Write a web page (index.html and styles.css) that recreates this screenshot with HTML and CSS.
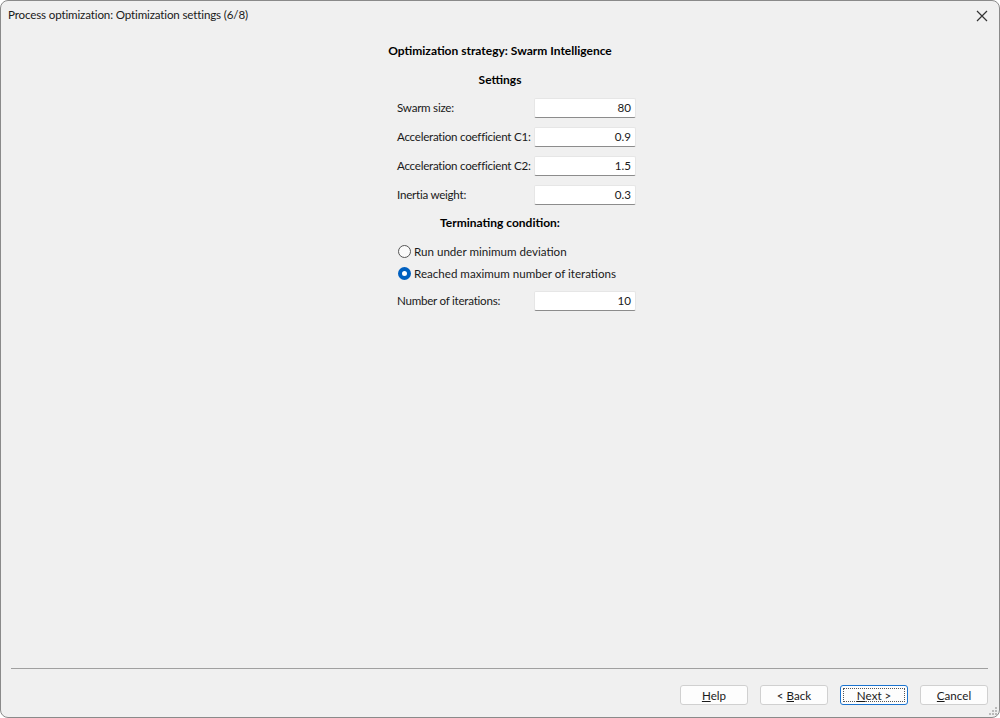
FILE: index.html
```html
<!DOCTYPE html>
<html>
<head>
<meta charset="utf-8">
<link rel="stylesheet" href="styles.css">
</head>
<body>
<div class="window">
  <div class="titlebar">
    <span class="title">Process optimization: Optimization settings (6/8)</span>
    <span class="close">
      <svg width="12" height="12" viewBox="0 0 12 12"><path d="M1 1 L11 11 M11 1 L1 11" stroke="#333" stroke-width="1.2" fill="none"/></svg>
    </span>
  </div>
  <div class="content">
    <div class="heading h-main">Optimization strategy: Swarm Intelligence</div>
    <div class="heading h-settings">Settings</div>
    <div class="form">
      <div class="row"><span class="label">Swarm size:</span><span class="input">80</span></div>
      <div class="row"><span class="label">Acceleration coefficient C1:</span><span class="input">0.9</span></div>
      <div class="row"><span class="label">Acceleration coefficient C2:</span><span class="input">1.5</span></div>
      <div class="row"><span class="label">Inertia weight:</span><span class="input">0.3</span></div>
    </div>
    <div class="heading h-term">Terminating condition:</div>
    <div class="form">
      <div class="radio"><span class="dot"></span><span>Run under minimum deviation</span></div>
      <div class="radio"><span class="dot checked"></span><span>Reached maximum number of iterations</span></div>
      <div class="row row-iter"><span class="label">Number of iterations:</span><span class="input">10</span></div>
    </div>
  </div>
  <div class="footer">
    <div class="separator"></div>
    <div class="buttons">
      <span class="btn"><u>H</u>elp</span>
      <span class="btn">&lt;&nbsp;<u>B</u>ack</span>
      <span class="btn default"><span class="focus"><u>N</u>ext&nbsp;&gt;</span></span>
      <span class="btn"><u>C</u>ancel</span>
    </div>
  </div>
  <svg class="grip" width="10" height="10" viewBox="0 0 10 10">
    <rect x="7" y="1" width="2" height="2" fill="#bbb"/>
    <rect x="4" y="4" width="2" height="2" fill="#bbb"/>
    <rect x="7" y="4" width="2" height="2" fill="#bbb"/>
    <rect x="1" y="7" width="2" height="2" fill="#bbb"/>
    <rect x="4" y="7" width="2" height="2" fill="#bbb"/>
    <rect x="7" y="7" width="2" height="2" fill="#bbb"/>
  </svg>
</div>
</body>
</html>
```
FILE: styles.css
```css
html, body {
  margin: 0;
  padding: 0;
  background: #ffffff;
}
body {
  font-family: "Lato", "Noto Sans", sans-serif;
  font-size: 11.6px;
  color: #1a1a1a;
}
.window {
  position: relative;
  width: 1000px;
  height: 718px;
  box-sizing: border-box;
  border: 1px solid #8a8a8a;
  border-radius: 8px;
  background: #f0f0f0;
  display: flex;
  flex-direction: column;
  overflow: hidden;
}
.titlebar {
  height: 26px;
  display: flex;
  align-items: center;
  justify-content: space-between;
  padding: 0 11px 0 7px;
  flex: none;
}
.title {
  color: #1a1a1a;
  letter-spacing: -0.15px;
}
.close {
  display: flex;
  width: 12px;
  height: 12px;
  margin-top: 3px;
}
.content {
  flex: 1;
  display: flex;
  flex-direction: column;
}
.heading {
  font-weight: bold;
  font-size: 12px;
  text-align: center;
  line-height: 16px;
  height: 16px;
  color: #000;
}
.h-main { margin-top: 16px; }
.h-settings { margin-top: 13px; margin-bottom: 5px; }
.h-term { margin-top: 6px; margin-bottom: 9px; }
.form {
  margin-left: 396px;
  width: 239px;
  display: flex;
  flex-direction: column;
}
.row {
  height: 29px;
  display: grid;
  grid-template-columns: 137px 102px;
  align-items: center;
}
.row-iter { margin-top: 2px; }
.label {
  color: #1a1a1a;
  white-space: nowrap;
  letter-spacing: -0.25px;
}
.input {
  height: 20px;
  box-sizing: border-box;
  background: #fff;
  border: 1px solid #e6e6e6;
  border-bottom: 1px solid #8c8c8c;
  border-radius: 2px;
  text-align: right;
  padding-right: 4px;
  line-height: 18px;
  color: #1a1a1a;
}
.radio {
  height: 22px;
  display: flex;
  align-items: center;
  gap: 3px;
  padding-left: 1px;
}
.dot {
  width: 13px;
  height: 13px;
  box-sizing: border-box;
  border-radius: 50%;
  border: 1px solid #555;
  background: #fafafa;
}
.dot.checked {
  border: 4px solid #0060c0;
  background: #fff;
}
.footer {
  flex: none;
  height: 49px;
  display: flex;
  flex-direction: column;
}
.separator {
  height: 1px;
  background: #a0a0a0;
  margin: 0 11px 0 10px;
}
.buttons {
  display: flex;
  justify-content: flex-end;
  gap: 12px;
  padding: 16px 11px 0 0;
}
.btn {
  width: 68px;
  height: 20px;
  box-sizing: border-box;
  background: #fdfdfd;
  border: 1px solid #d0d0d0;
  border-radius: 3px;
  display: flex;
  align-items: center;
  justify-content: center;
  color: #1a1a1a;
}
.btn.default {
  border: 1px solid #1a73d0;
  padding: 2px;
}
.focus {
  flex: 1;
  align-self: stretch;
  border: 1px dotted #555;
  display: flex;
  align-items: center;
  justify-content: center;
}
.grip {
  position: absolute;
  right: 1px;
  bottom: 1px;
}
```
